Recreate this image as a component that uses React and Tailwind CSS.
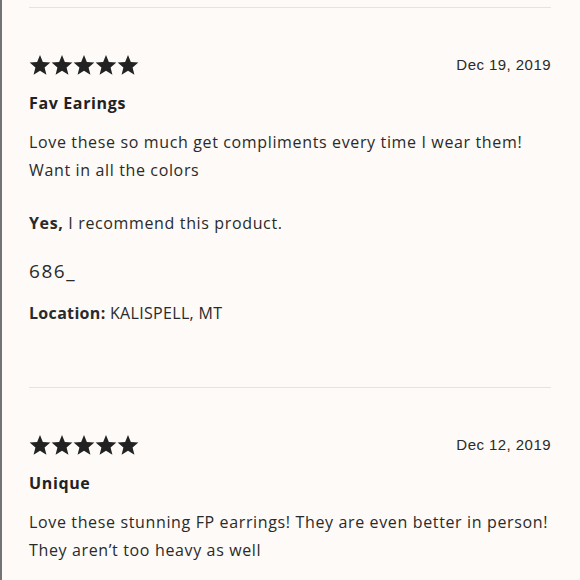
import React from "react";

const reviews = [
  {
    date: "Dec 19, 2019",
    title: "Fav Earings",
    body: "Love these so much get compliments every time I wear them! Want in all the colors",
    extra: true,
  },
  {
    date: "Dec 12, 2019",
    title: "Unique",
    body: "Love these stunning FP earrings! They are even better in person! They aren’t too heavy as well",
    extra: false,
  },
];

function Star() {
  return (
    <svg width="22" height="22" viewBox="0 0 24 24" className="block">
      <path
        fill="#222222"
        d="M12 1.2l3.1 7.6 8.2.6-6.3 5.3 2 8-7-4.4-7 4.4 2-8L.7 9.4l8.2-.6z"
      />
    </svg>
  );
}

function Review({ r }) {
  return (
    <div className="border-t border-[#e6e2de]">
      <div className="pt-[46px] flex items-center justify-between h-[22px] box-content">
        <div className="flex">
          {[0, 1, 2, 3, 4].map((i) => (
            <Star key={i} />
          ))}
        </div>
        <span className="text-[15px] tracking-[0.03em] text-[#2a2a2a] font-['Liberation_Sans',sans-serif]">
          {r.date}
        </span>
      </div>
      <h3 className="mt-[15px] text-[16px] leading-[24px] font-bold tracking-[0.04em] text-[#222]">
        {r.title}
      </h3>
      <p className="mt-[13px] text-[16px] leading-[28px] tracking-[0.04em] text-[#2a2a2a]">
        {r.body}
      </p>
      {r.extra && (
        <div className="mb-[60px]">
          <p className="mt-[25px] text-[16px] leading-[28px] tracking-[0.04em] text-[#2a2a2a]">
            <span className="font-bold">Yes,</span> I recommend this product.
          </p>
          <p className="mt-[20px] text-[19px] leading-[28px] tracking-[0.08em] text-[#2a2a2a]">
            686_
          </p>
          <p className="mt-[14px] text-[16px] leading-[28px] tracking-[0.02em] text-[#2a2a2a]">
            <span className="font-bold">Location:</span> KALISPELL, MT
          </p>
        </div>
      )}
    </div>
  );
}

export default function App() {
  return (
    <div className="w-[580px] h-[580px] overflow-hidden bg-[#fdfaf7] border-l-2 border-[#747474] font-['Open_Sans',sans-serif]">
      <div className="ml-[27px] mr-[29px] pt-[7px]">
        {reviews.map((r) => (
          <Review key={r.date} r={r} />
        ))}
      </div>
    </div>
  );
}
